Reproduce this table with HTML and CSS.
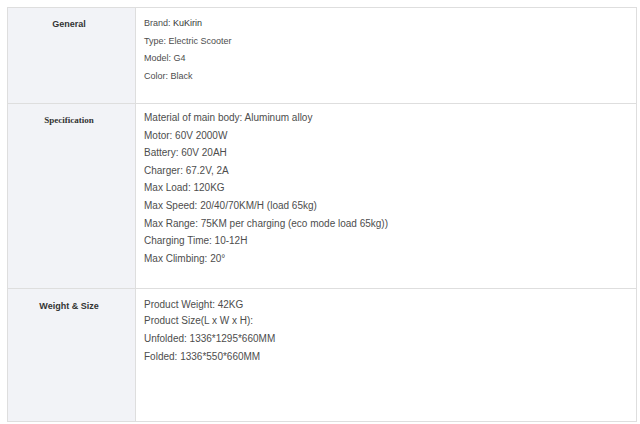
FILE: index.html
```html
<!DOCTYPE html>
<html>
<head>
<meta charset="utf-8">
<link rel="stylesheet" href="styles.css">
</head>
<body>
<table class="spec">
  <tr class="row row-general">
    <th class="label">General</th>
    <td class="value small">
      <div class="line">Brand: <span class="brand">KuKirin</span></div>
      <div class="line">Type: Electric Scooter</div>
      <div class="line">Model: G4</div>
      <div class="line">Color: Black</div>
    </td>
  </tr>
  <tr class="row row-spec">
    <th class="label serif">Specification</th>
    <td class="value">
      <div class="line">Material of main body: Aluminum alloy</div>
      <div class="line">Motor: 60V 2000W</div>
      <div class="line">Battery: 60V 20AH</div>
      <div class="line">Charger: 67.2V, 2A</div>
      <div class="line">Max Load: 120KG</div>
      <div class="line">Max Speed: 20/40/70KM/H (load 65kg)</div>
      <div class="line">Max Range: 75KM per charging (eco mode load 65kg))</div>
      <div class="line">Charging Time: 10-12H</div>
      <div class="line">Max Climbing: 20°</div>
    </td>
  </tr>
  <tr class="row row-weight">
    <th class="label">Weight &amp; Size</th>
    <td class="value">
      <div class="tight">Product Weight: 42KG<br>Product Size(L x W x H):</div>
      <div class="line">Unfolded: 1336*1295*660MM</div>
      <div class="line">Folded: 1336*550*660MM</div>
    </td>
  </tr>
</table>
</body>
</html>
```
FILE: styles.css
```css
html, body {
  margin: 0;
  padding: 0;
  background: #fff;
}
body {
  padding: 7px 0 0 7px;
  font-family: "Liberation Sans", Arial, sans-serif;
}
.spec {
  border-collapse: collapse;
  width: 630px;
  table-layout: fixed;
}
.spec th, .spec td {
  border: 1px solid #dedede;
  vertical-align: top;
  padding: 0;
}
.label {
  width: 122px;
  background: #f2f3f7;
  color: #333;
  font-size: 9px;
  font-weight: bold;
  text-align: center;
  padding-right: 5px !important;
  line-height: 17px;
}
.row-general .label { padding-top: 8px !important; }
.row-spec .label { padding-top: 8px !important; }
.row-weight .label { padding-top: 9px !important; }
.serif {
  font-family: "Liberation Serif", "Times New Roman", serif;
  font-size: 9px;
}
.value {
  color: #4d4d4d;
  font-size: 10px;
  line-height: 17.6px;
  padding-left: 8px !important;
}
.small {
  font-size: 9px;
  line-height: 17.5px;
}
.brand {
  color: #333;
}
.row-general { height: 96px; }
.row-general .value { padding-top: 7px !important; }
.row-spec { height: 185px; }
.row-spec .value { padding-top: 5px !important; }
.row-weight { height: 133px; }
.row-weight .value { padding-top: 8px !important; }
.tight {
  line-height: 16px;
  margin-bottom: 1px;
}
```
